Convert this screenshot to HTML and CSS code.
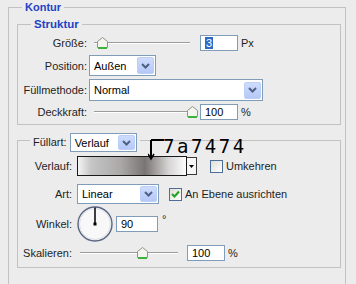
FILE: index.html
```html
<!DOCTYPE html>
<html lang="de">
<head>
    <meta charset="UTF-8">
    <title>Kontur</title>
    <link rel="stylesheet" href="styles.css">
</head>
<body>
    <fieldset class="group outer">
        <legend class="group-title outer-title">Kontur</legend>

        <!-- Struktur -->
        <fieldset class="group struktur">
            <legend class="group-title struktur-title">Struktur</legend>

            <div class="row row-size">
                <span class="label label-wide">Größe:</span>
                <div class="slider slider-wide">
                    <span class="thumb" style="left: 3px">
                        <svg width="11" height="12" viewBox="0 0 11 12"><path d="M0.5 4.5 L5.5 0.5 L10.5 4.5 L10.5 10.5 L0.5 10.5 Z" fill="#f4f4ef" stroke="#8d9688"/><rect x="1" y="10" width="9" height="2" fill="#3cb43c"/></svg>
                    </span>
                </div>
                <div class="field field-px"><span class="selected">3</span></div>
                <span class="unit">Px</span>
            </div>

            <div class="row row-position">
                <span class="label label-wide">Position:</span>
                <div class="select select-pos">
                    <span class="select-text">Außen</span>
                    <span class="select-btn"><svg width="9" height="6" viewBox="0 0 9 6"><path d="M1 1 L4.5 4.5 L8 1" fill="none" stroke="#4d6185" stroke-width="2"/></svg></span>
                </div>
            </div>

            <div class="row row-mode">
                <span class="label label-wide">Füllmethode:</span>
                <div class="select select-mode">
                    <span class="select-text">Normal</span>
                    <span class="select-btn"><svg width="9" height="6" viewBox="0 0 9 6"><path d="M1 1 L4.5 4.5 L8 1" fill="none" stroke="#4d6185" stroke-width="2"/></svg></span>
                </div>
            </div>

            <div class="row row-opacity">
                <span class="label label-wide">Deckkraft:</span>
                <div class="slider slider-wide">
                    <span class="thumb" style="left: 93px">
                        <svg width="11" height="12" viewBox="0 0 11 12"><path d="M0.5 4.5 L5.5 0.5 L10.5 4.5 L10.5 10.5 L0.5 10.5 Z" fill="#f4f4ef" stroke="#8d9688"/><rect x="1" y="10" width="9" height="2" fill="#3cb43c"/></svg>
                    </span>
                </div>
                <div class="field field-px">100</div>
                <span class="unit">%</span>
            </div>
        </fieldset>

        <!-- Füllart -->
        <fieldset class="group fill">
            <legend class="fill-title">
                <span class="fill-label">Füllart:</span>
                <div class="select select-fill">
                    <span class="select-text">Verlauf</span>
                    <span class="select-btn"><svg width="9" height="6" viewBox="0 0 9 6"><path d="M1 1 L4.5 4.5 L8 1" fill="none" stroke="#4d6185" stroke-width="2"/></svg></span>
                </div>
                <span class="note">
                    <svg class="note-arrow" width="16" height="22" viewBox="0 0 16 22"><path d="M3 1 H16" stroke="#000" stroke-width="2"/><path d="M3 1 V19" stroke="#000" stroke-width="2"/><path d="M0 15 L3 20 L6 15" fill="none" stroke="#000" stroke-width="1.5"/></svg>
                    <span class="note-text">7a7474</span>
                </span>
            </legend>

            <div class="row row-gradient">
                <span class="label label-narrow">Verlauf:</span>
                <div class="gradient"></div>
                <span class="gradient-btn"><svg width="5" height="3" viewBox="0 0 5 3"><path d="M0 0 H5 L2.5 3 Z" fill="#000"/></svg></span>
                <span class="check check-reverse"></span>
                <span class="check-label">Umkehren</span>
            </div>

            <div class="row row-type">
                <span class="label label-narrow">Art:</span>
                <div class="select select-type">
                    <span class="select-text">Linear</span>
                    <span class="select-btn"><svg width="9" height="6" viewBox="0 0 9 6"><path d="M1 1 L4.5 4.5 L8 1" fill="none" stroke="#4d6185" stroke-width="2"/></svg></span>
                </div>
                <span class="check check-align">
                    <svg width="11" height="11" viewBox="0 0 11 11"><path d="M2 5 L4.5 7.5 L9 2.5" fill="none" stroke="#21a121" stroke-width="2"/></svg>
                </span>
                <span class="check-label">An Ebene ausrichten</span>
            </div>

            <div class="row row-angle">
                <span class="label label-narrow">Winkel:</span>
                <svg class="dial" width="36" height="36" viewBox="0 0 36 36">
                    <circle cx="18" cy="18" r="17" fill="#f8f8f8" stroke="#5b6582" stroke-width="1.4"/>
                    <circle cx="18" cy="18" r="15.5" fill="none" stroke="#dcdfe6" stroke-width="1"/>
                    <path d="M18 18 V1.5" stroke="#000" stroke-width="1.5"/>
                    <rect x="16.5" y="16.5" width="3" height="3" fill="#000"/>
                </svg>
                <div class="field field-angle">90</div>
                <span class="unit unit-deg">°</span>
            </div>

            <div class="row row-scale">
                <span class="label label-narrow">Skalieren:</span>
                <div class="slider slider-scale">
                    <span class="thumb" style="left: 57px">
                        <svg width="11" height="12" viewBox="0 0 11 12"><path d="M0.5 4.5 L5.5 0.5 L10.5 4.5 L10.5 10.5 L0.5 10.5 Z" fill="#f4f4ef" stroke="#8d9688"/><rect x="1" y="10" width="9" height="2" fill="#3cb43c"/></svg>
                    </span>
                </div>
                <div class="field field-scale">100</div>
                <span class="unit">%</span>
            </div>
        </fieldset>
    </fieldset>
</body>
</html>
```

FILE: styles.css
```css
body {
    margin: 0;
    width: 356px;
    height: 284px;
    overflow: hidden;
    background-color: #ececec;
    font-family: "Liberation Sans", Arial, sans-serif;
    font-size: 11px;
    color: #1e1e1e;
}
.group {
    box-sizing: border-box;
    margin: 0;
    padding: 0;
    min-width: 0;
    border: 1px solid #c2c2c2;
}
.group-title {
    padding: 0 3px;
    line-height: 14px;
    color: #2243c4;
    font-weight: bold;
}
/* outer box runs on below the visible area, so no bottom edge */
.outer {
    width: 338px;
    margin-left: 8px;
    padding: 0 4px 17px 8px;
    border-bottom: none;
}
.outer-title {
    margin-left: 5px;
}
.struktur {
    width: 324px;
    margin-top: 3px;
    padding-bottom: 4px;
}
.struktur-title {
    margin-left: 13px;
    font-size: 11.5px;
}
.row {
    display: flex;
    align-items: center;
}
.label {
    flex-shrink: 0;
    text-align: right;
}
.label-wide {
    width: 69px;
    margin-right: 2px;
}
.label-narrow {
    width: 54px;
    margin-right: 5px;
}
.row-size {
    margin-top: 4px;
    height: 16px;
}
.row-position {
    margin-top: 4px;
    height: 21px;
}
.row-mode {
    margin-top: 3px;
    height: 22px;
}
.row-opacity {
    margin-top: 3px;
    height: 16px;
}

/* sliders */
.slider {
    position: relative;
    height: 14px;
}
.slider::before {
    content: "";
    position: absolute;
    left: 0;
    right: 0;
    top: 6px;
    height: 1px;
    background-color: #9c9c9c;
    border-bottom: 1px solid #ffffff;
}
.slider-wide {
    width: 96px;
    margin-left: 5px;
}
.slider-scale {
    width: 98px;
    margin-left: 3px;
}
.thumb {
    position: absolute;
    top: 1px;
    width: 11px;
    height: 12px;
    display: block;
}
.thumb svg {
    display: block;
}

/* text fields */
.field {
    box-sizing: border-box;
    height: 16px;
    border: 1px solid #7f9db9;
    background-color: #ffffff;
    padding-left: 4px;
    line-height: 14px;
    color: #000;
}
.field-px {
    width: 38px;
    margin-left: 10px;
}
.field-angle {
    width: 42px;
    margin-left: 3px;
}
.field-scale {
    width: 38px;
    margin-left: 9px;
}
.selected {
    background-color: #316ac5;
    color: #ffffff;
    padding: 0 1px;
}
.unit {
    margin-left: 3px;
}
.unit-deg {
    margin-left: 4px;
    align-self: flex-start;
    margin-top: 7px;
}

/* dropdowns */
.select {
    box-sizing: border-box;
    display: flex;
    align-items: center;
    height: 21px;
    border: 1px solid #7f9db9;
    background-color: #ffffff;
    color: #000;
}
.select-text {
    flex: 1;
    padding-left: 4px;
}
.select-btn {
    box-sizing: border-box;
    width: 17px;
    height: 17px;
    margin-right: 1px;
    display: flex;
    align-items: center;
    justify-content: center;
    background: linear-gradient(#cedcfd, #b5c8f6);
    border: 1px solid #bccff8;
    border-radius: 2px;
}
.select-btn svg {
    display: block;
}
.select-pos {
    width: 67px;
}
.select-mode {
    width: 174px;
    height: 22px;
}
.select-fill {
    width: 67px;
    height: 19px;
}
.select-fill .select-btn {
    height: 15px;
}
.select-type {
    width: 82px;
    height: 20px;
}
.select-type .select-btn {
    height: 16px;
}

/* Füllart */
.fill {
    width: 324px;
    margin-top: 8px;
    padding-bottom: 6px;
}
.fill-title {
    position: relative;
    display: flex;
    align-items: flex-start;
    height: 14px;
    margin-left: 12px;
    padding: 0 3px;
}
.fill-label {
    line-height: 19px;
    margin-right: 3px;
}
.note {
    position: absolute;
    left: 118px;
    top: 6px;
    display: flex;
    align-items: flex-start;
}
.note-arrow {
    display: block;
}
.note-text {
    margin-left: -1px;
    margin-top: -2px;
    font-family: "DejaVu Sans Mono", monospace;
    font-size: 19px;
    line-height: 19px;
    letter-spacing: 2.5px;
    color: #000;
}
.row-gradient {
    margin-top: 9px;
    height: 20px;
}
.gradient {
    box-sizing: border-box;
    width: 110px;
    height: 20px;
    border: 1px solid #1a1a1a;
    background: linear-gradient(90deg, #f4f4f4 0%, #c6c6c6 12%, #aaa7a7 40%, #7a7474 62%, #d6d4d4 84%, #fdfdfd 100%);
}
.gradient-btn {
    box-sizing: border-box;
    width: 10px;
    height: 18px;
    border: 1px solid #3a3a3a;
    border-left: none;
    background-color: #f6f6f6;
    display: flex;
    align-items: center;
    justify-content: center;
}
.gradient-btn svg {
    display: block;
}
.check {
    box-sizing: border-box;
    width: 13px;
    height: 13px;
    border: 1px solid #4d6e96;
    background: linear-gradient(135deg, #dedfd8, #ffffff);
    display: flex;
    align-items: center;
    justify-content: center;
}
.check svg {
    display: block;
}
.check-reverse {
    margin-left: 13px;
}
.check-align {
    margin-left: 10px;
}
.check-label {
    margin-left: 3px;
}
.row-type {
    margin-top: 8px;
    height: 20px;
}
.row-angle {
    margin-top: 2px;
    height: 36px;
}
.dial {
    display: block;
}
.row-scale {
    margin-top: 3px;
    height: 16px;
}
```
